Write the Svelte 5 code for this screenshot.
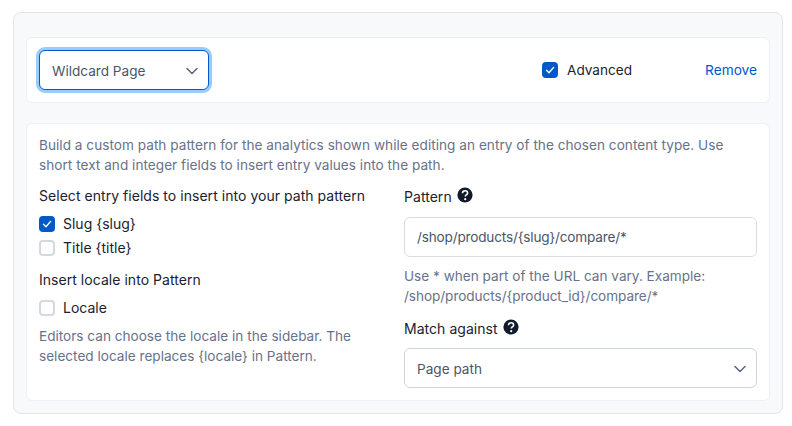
<script>
  let advanced = $state(true);
  let slug = $state(true);
  let title = $state(false);
  let locale = $state(false);
  let pattern = $state('/shop/products/{slug}/compare/*');
</script>

{#snippet chevron()}
  <svg class="chevron" viewBox="0 0 12 8" width="12" height="8" fill="none" aria-hidden="true">
    <path d="M1 1.5 6 6.5l5-5" stroke="#5b6579" stroke-width="1.5" stroke-linecap="round" stroke-linejoin="round" />
  </svg>
{/snippet}

{#snippet help()}
  <svg class="help" viewBox="0 0 16 16" width="16" height="16" aria-hidden="true">
    <circle cx="8" cy="8" r="7.6" fill="#111b2b" />
    <path d="M5.5 6.2c0-1.5 1.1-2.4 2.6-2.4s2.5.9 2.5 2.1c0 1-.6 1.5-1.3 2-.7.5-1 .8-1 1.5v.2" fill="none" stroke="#fff" stroke-width="1.6" />
    <circle cx="8.2" cy="12.2" r="1.1" fill="#fff" />
  </svg>
{/snippet}

{#snippet checkbox(checked, onchange)}
  <span class="box" class:checked>
    <input type="checkbox" {checked} {onchange} />
    {#if checked}
      <svg viewBox="0 0 16 16" width="16" height="16" fill="none" aria-hidden="true">
        <path d="M4.5 8.3 7 10.8l4.6-5.4" stroke="#fff" stroke-width="1.4" stroke-linecap="round" stroke-linejoin="round" />
      </svg>
    {/if}
  </span>
{/snippet}

<div class="outer">
  <div class="card head">
    <label class="select focused">
      <span>Wildcard Page</span>
      {@render chevron()}
    </label>
    <label class="check advanced">
      {@render checkbox(advanced, () => (advanced = !advanced))}
      <span>Advanced</span>
    </label>
    <button class="remove" type="button">Remove</button>
  </div>

  <div class="card body">
    <p class="muted intro">
      Build a custom path pattern for the analytics shown while editing an entry of the chosen content type. Use short text and integer fields to insert entry values into the path.
    </p>
    <div class="columns">
      <div class="col">
        <div class="label first">Select entry fields to insert into your path pattern</div>
        <label class="check">
          {@render checkbox(slug, () => (slug = !slug))}
          <span>Slug {'{slug}'}</span>
        </label>
        <label class="check">
          {@render checkbox(title, () => (title = !title))}
          <span>Title {'{title}'}</span>
        </label>
        <div class="label second">Insert locale into Pattern</div>
        <label class="check solo">
          {@render checkbox(locale, () => (locale = !locale))}
          <span>Locale</span>
        </label>
        <p class="muted note">
          Editors can choose the locale in the sidebar. The selected locale replaces {'{locale}'} in Pattern.
        </p>
      </div>
      <div class="col">
        <div class="label first withhelp pattern">Pattern {@render help()}</div>
        <input class="field" type="text" bind:value={pattern} />
        <p class="muted hint">Use * when part of the URL can vary. Example:<br /><span class="path">/shop/products/{'{product_id}'}/compare/*</span></p>
        <div class="label withhelp match">Match against {@render help()}</div>
        <label class="select wide">
          <span>Page path</span>
          {@render chevron()}
        </label>
      </div>
    </div>
  </div>
</div>

<style>
  :global(body) {
    margin: 0;
    background: #fff;
    font-family: Inter, 'Liberation Sans', sans-serif;
    font-size: 14px;
    line-height: 20px;
    color: #1a2230;
  }

  .outer {
    box-sizing: border-box;
    width: 770px;
    margin: 12px 0 0 13px;
    padding: 24px 12px 12px;
    display: flex;
    flex-direction: column;
    gap: 20px;
    background: #f7f9fa;
    border: 1px solid #e2e5ea;
    border-radius: 8px;
  }

  .card {
    box-sizing: border-box;
    background: #fff;
    border: 1px solid #eef0f3;
    border-radius: 6px;
  }

  .head {
    height: 66px;
    padding: 0 12px;
    display: flex;
    align-items: center;
  }

  .select {
    box-sizing: border-box;
    height: 40px;
    padding: 1px 10px 0 12px;
    display: flex;
    align-items: center;
    justify-content: space-between;
    background: #fff;
    border: 1px solid #cfd3dc;
    border-radius: 6px;
    font-size: 13.6px;
    color: #4a556a;
    white-space: nowrap;
  }

  .focused {
    width: 170px;
    border-color: #0059c8;
    box-shadow: 0 0 0 3px #98cbff;
  }

  .wide {
    width: 100%;
  }

  .check {
    display: flex;
    align-items: center;
    gap: 8px;
    height: 24px;
  }

  .advanced {
    margin-left: auto;
    gap: 9px;
    font-size: 13.6px;
  }

  .remove {
    margin-left: 73px;
    padding: 0;
    background: none;
    border: 0;
    font: inherit;
    font-size: 13.7px;
    color: #0059c8;
    cursor: pointer;
  }

  .box {
    position: relative;
    box-sizing: border-box;
    width: 16px;
    height: 16px;
    flex: none;
    background: #fff;
    border: 2px solid #d3d9df;
    border-radius: 4px;
    display: flex;
    align-items: center;
    justify-content: center;
  }

  .box.checked {
    background: #0059c8;
    border-color: #0059c8;
  }

  .box svg {
    flex: none;
  }

  .box input {
    position: absolute;
    inset: -2px;
    margin: 0;
    opacity: 0;
    cursor: pointer;
  }

  .body {
    padding: 10px 12px 12px;
  }

  p {
    margin: 0;
  }

  .muted {
    font-size: 13.6px;
    color: #67728a;
  }

  .intro {
    padding-top: 1px;
    letter-spacing: 0.03px;
  }

  .columns {
    display: grid;
    grid-template-columns: 1fr 1fr;
    gap: 12px;
    margin-top: 11px;
  }

  .col {
    min-width: 0;
  }

  .label {
    font-weight: 400;
    letter-spacing: 0.04px;
  }

  .first {
    margin-bottom: 6px;
  }

  .second {
    margin: 10px 0 6px;
  }

  .solo {
    margin-top: 6px;
  }

  .note {
    margin-top: 6px;
  }

  .withhelp {
    display: flex;
    align-items: center;
    gap: 5px;
  }

  .pattern {
    padding-top: 1px;
  }

  .help {
    margin-top: -4px;
  }

  .field {
    box-sizing: border-box;
    display: block;
    width: 100%;
    height: 40px;
    margin-top: 10px;
    padding: 0 12px;
    background: #fff;
    border: 1px solid #d9dde3;
    border-radius: 6px;
    font: inherit;
    font-size: 13.6px;
    letter-spacing: -0.18px;
    color: #4a556a;
    outline: none;
  }

  .hint {
    margin-top: 9px;
  }

  .path {
    letter-spacing: -0.06px;
  }

  .match {
    margin: 13px 0 9px;
  }
</style>
